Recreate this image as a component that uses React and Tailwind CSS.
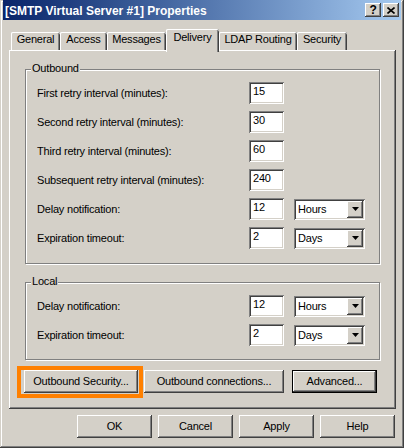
import React from "react";

const raised =
  "shadow-[inset_-1px_-1px_#404040,inset_1px_1px_#fff,inset_-2px_-2px_#808080]";
const sunken =
  "shadow-[inset_1px_1px_#808080,inset_-1px_-1px_#fff,inset_2px_2px_#404040,inset_-2px_-2px_#d4d0c8]";

const TextBox = ({ value }) => (
  <div className={`w-[35px] h-[22px] bg-white pl-[4px] pt-[3px] leading-[13px] ${sunken}`}>
    {value}
  </div>
);

const Select = ({ value }) => (
  <div className={`ml-[10px] w-[71px] h-[21px] bg-white p-[2px] flex items-center ${sunken}`}>
    <span className="flex-1 pl-[2px] leading-[13px]">{value}</span>
    <div className={`w-[16px] h-full bg-[#d4d0c8] flex items-center justify-center ${raised}`}>
      <svg width="7" height="4" viewBox="0 0 7 4">
        <polygon points="0,0 7,0 3.5,4" fill="#000" />
      </svg>
    </div>
  </div>
);

const Row = ({ label, value, unit }) => (
  <div className="flex items-center h-[22px]">
    <span className="w-[212px] leading-[13px]">{label}</span>
    <TextBox value={value} />
    {unit && <Select value={unit} />}
  </div>
);

const Group = ({ title, children, className = "" }) => (
  <div
    className={`relative mx-[16px] border border-[#808080] shadow-[inset_1px_1px_#fff,1px_1px_#fff] pl-[11px] pt-[12px] flex flex-col gap-[7px] ${className}`}
  >
    <span className="absolute left-[5px] top-[-8px] px-[1px] bg-[#d4d0c8] leading-[13px]">
      {title}
    </span>
    {children}
  </div>
);

const Button = ({ children, className = "" }) => (
  <button className={`h-[23px] bg-[#d4d0c8] text-center leading-[13px] ${raised} ${className}`}>
    {children}
  </button>
);

const tabs = [
  ["General", 49],
  ["Access", 47],
  ["Messages", 59],
  ["Delivery", 53],
  ["LDAP Routing", 78],
  ["Security", 50],
];

export default function App() {
  return (
    <div className="w-[404px] h-[448px] bg-[#d4d0c8] px-[3px] flex flex-col text-[11px] tracking-[-0.2px] text-black font-['Liberation_Sans',Arial,sans-serif] shadow-[inset_-1px_-1px_#404040,inset_1px_1px_#d4d0c8,inset_-2px_-2px_#808080,inset_2px_2px_#fff]">
      {/* Title bar */}
      <div className="h-[20px] bg-linear-to-r from-[#0a246a] to-[#a6caf0] flex items-center pl-[2px] pr-[2px]">
        <span className="flex-1 text-white font-bold text-[12px] tracking-normal leading-[14px] pt-[2px]">
          [SMTP Virtual Server #1] Properties
        </span>
        <div className={`w-[16px] h-[14px] bg-[#d4d0c8] flex items-center justify-center font-bold text-[12px] leading-[12px] ${raised}`}>
          ?
        </div>
        <div className={`ml-[2px] w-[16px] h-[14px] bg-[#d4d0c8] flex items-center justify-center ${raised}`}>
          <svg width="8" height="7" viewBox="0 0 8 7">
            <path d="M0.5 0.5 L7.5 6.5 M7.5 0.5 L0.5 6.5" stroke="#000" strokeWidth="1.6" fill="none" />
          </svg>
        </div>
      </div>

      {/* Tabs */}
      <div className="mt-[9px] ml-[8px] h-[21px] flex items-end">
        {tabs.map(([name, w]) => {
          const sel = name === "Delivery";
          return (
            <div
              key={name}
              style={{ width: w }}
              className={`rounded-t-[2px] bg-[#d4d0c8] text-center leading-[13px] shadow-[inset_1px_0_#fff,inset_0_1px_#fff,inset_-1px_0_#404040,inset_-2px_0_#808080] ${
                sel ? "relative z-10 h-[23px] -mb-[2px] pt-[2px]" : "h-[18px] pt-[1px]"
              }`}
            >
              {name}
            </div>
          );
        })}
      </div>

      {/* Panel */}
      <div className={`ml-[6px] w-[387px] h-[359px] bg-[#d4d0c8] flex flex-col ${raised}`}>
        <Group title="Outbound" className="mt-[19px] pb-[14px]">
          <Row label="First retry interval (minutes):" value="15" />
          <Row label="Second retry interval (minutes):" value="30" />
          <Row label="Third retry interval (minutes):" value="60" />
          <Row label="Subsequent retry interval (minutes):" value="240" />
          <Row label="Delay notification:" value="12" unit="Hours" />
          <Row label="Expiration timeout:" value="2" unit="Days" />
        </Group>

        <Group title="Local" className="mt-[18px] pb-[13px]">
          <Row label="Delay notification:" value="12" unit="Hours" />
          <Row label="Expiration timeout:" value="2" unit="Days" />
        </Group>

        <div className="mt-[10px] ml-[15px] flex">
          <div className="relative">
            <Button className="w-[114px]">Outbound Security...</Button>
            <span className="absolute -left-[7px] -right-[5px] -top-[4px] -bottom-[5px] border-[4px] border-[#ff8000] pointer-events-none" />
          </div>
          <Button className="ml-[6px] w-[140px]">Outbound connections...</Button>
          <div className="ml-[8px] w-[85px] h-[23px] border border-black flex">
            <Button className="flex-1 h-full">Advanced...</Button>
          </div>
        </div>
      </div>

      {/* Dialog buttons */}
      <div className="mt-[6px] mr-[6px] flex justify-end gap-[6px]">
        <Button className="w-[75px]">OK</Button>
        <Button className="w-[75px]">Cancel</Button>
        <Button className="w-[75px]">Apply</Button>
        <Button className="w-[75px]">Help</Button>
      </div>
    </div>
  );
}
